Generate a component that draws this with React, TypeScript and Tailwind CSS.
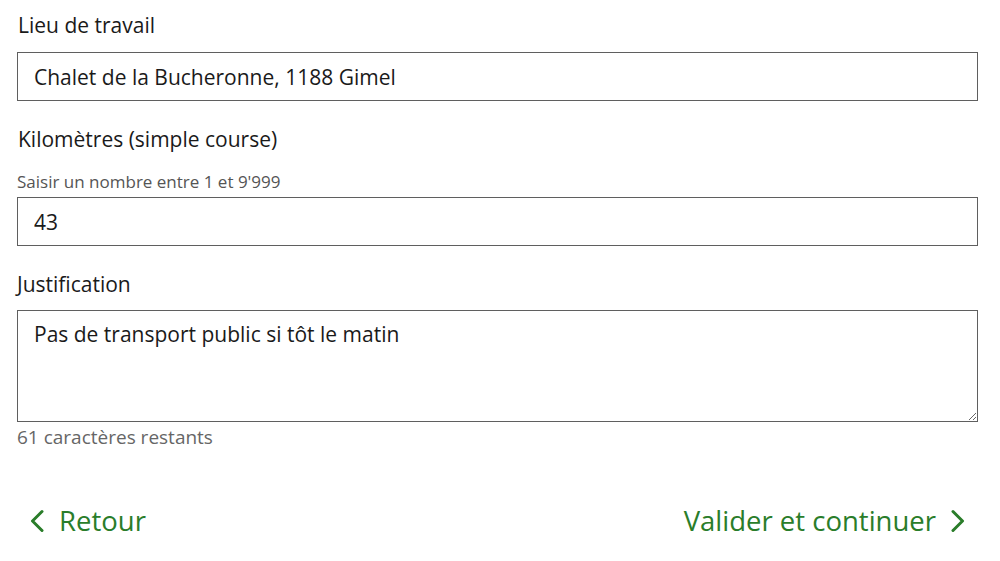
import { useState } from 'react';

const MAX_JUSTIFICATION = 100;

function ChevronLeft() {
  return (
    <svg width="14" height="24" viewBox="0 0 14 24" fill="none" aria-hidden="true">
      <polyline points="12,2.5 2.5,12 12,21.5" stroke="currentColor" strokeWidth="3" strokeLinecap="round" strokeLinejoin="round" />
    </svg>
  );
}

function ChevronRight() {
  return (
    <svg width="14" height="24" viewBox="0 0 14 24" fill="none" aria-hidden="true">
      <polyline points="2,2.5 11.5,12 2,21.5" stroke="currentColor" strokeWidth="3" strokeLinecap="round" strokeLinejoin="round" />
    </svg>
  );
}

export default function App() {
  const [lieu, setLieu] = useState('Chalet de la Bucheronne, 1188 Gimel');
  const [km, setKm] = useState('43');
  const [justification, setJustification] = useState('Pas de transport public si tôt le matin');

  const remaining = MAX_JUSTIFICATION - justification.length;

  return (
    <div className="min-h-screen bg-white font-['Open_Sans',sans-serif] text-[#1a1a1a]">
      <form className="flex flex-col pl-[17px] pr-[22px] pt-[11px]" onSubmit={(e) => e.preventDefault()}>
        {/* Lieu de travail */}
        <label htmlFor="lieu" className="block pl-px text-[21px] leading-[28px]">
          Lieu de travail
        </label>
        <input
          id="lieu"
          type="text"
          value={lieu}
          onChange={(e) => setLieu(e.target.value)}
          className="mt-[13px] h-[49px] w-full border border-[#5f5f5f] px-[16px] text-[21px] leading-[28px] text-[#1a1a1a] outline-none"
        />

        {/* Kilomètres */}
        <label htmlFor="km" className="mt-[24px] block pl-px text-[21px] leading-[28px]">
          Kilomètres (simple course)
        </label>
        <p className="mt-[18px] text-[17px] leading-[22px] text-[#555]">Saisir un nombre entre 1 et 9'999</p>
        <input
          id="km"
          type="text"
          inputMode="numeric"
          value={km}
          onChange={(e) => setKm(e.target.value)}
          className="mt-[4px] h-[49px] w-full border border-[#5f5f5f] px-[16px] text-[21px] leading-[28px] text-[#1a1a1a] outline-none"
        />

        {/* Justification */}
        <label htmlFor="justification" className="mt-[24px] block text-[21px] leading-[28px]">
          Justification
        </label>
        <textarea
          id="justification"
          maxLength={MAX_JUSTIFICATION}
          value={justification}
          onChange={(e) => setJustification(e.target.value)}
          className="mt-[12px] h-[112px] w-full border border-[#5f5f5f] px-[16px] pt-[9px] text-[21px] leading-[28px] text-[#1a1a1a] outline-none"
        />
        <p className="mt-[3px] text-[19px] leading-[24px] text-[#666]">{remaining} caractères restants</p>

        {/* Navigation */}
        <div className="mt-[54px] flex items-center justify-between">
          <button type="button" className="flex items-center gap-[15px] pl-[13px] text-[27.5px] leading-[36px] text-[#2a7d2a]">
            <ChevronLeft />
            <span>Retour</span>
          </button>
          <button type="submit" className="flex items-center gap-[15px] pr-[13px] text-[27.5px] leading-[36px] text-[#2a7d2a]">
            <span>Valider et continuer</span>
            <ChevronRight />
          </button>
        </div>
      </form>
    </div>
  );
}
